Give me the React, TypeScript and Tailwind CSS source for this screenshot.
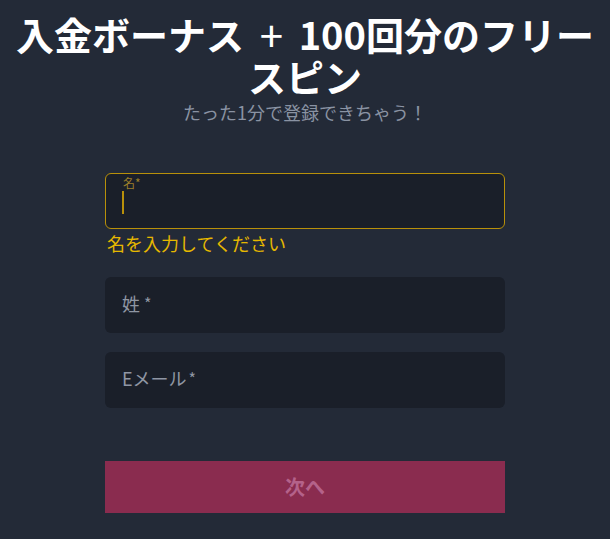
import React from "react";

export default function App() {
  return (
    <div
      className="w-full min-h-[539px] bg-[#232a37] flex flex-col items-center pt-[13px]"
      style={{ fontFamily: '"Noto Sans CJK JP", "Noto Sans", sans-serif' }}
    >
      <h1 className="text-[38px] leading-[42px] font-bold text-white text-center whitespace-nowrap">
        入金ボーナス{" "}
        <span className="inline-block font-normal text-[42px] leading-[42px] align-top mx-[7px]">+</span>{" "}
        100回分のフリー
        <br />
        スピン
      </h1>
      <p className="text-[18px] leading-[24px] text-[#8a93a3] text-center mt-[3px]">
        たった1分で登録できちゃう！
      </p>
      <form className="w-[400px] mt-[49px] flex flex-col">
        <div className="relative h-[56px] rounded-[6px] border border-[#b8900a] bg-[#1a1f29]">
          <span className="absolute left-[17px] top-[1px] text-[12px] leading-[16px] text-[#9c7f2a]">
            名*
          </span>
          <span className="absolute left-[16px] top-[17px] w-[1.5px] h-[23px] bg-[#b8900a]" />
        </div>
        <div className="text-[18px] leading-[24px] text-[#e6b800] mt-[2px] pl-[2px]">
          名を入力してください
        </div>
        <div className="h-[56px] rounded-[6px] bg-[#1a1f29] mt-[22px] flex items-center pl-[17px] pb-[4px] text-[18px] text-[#8f96a3]">
          姓<span className="ml-[4px] text-[16px]">*</span>
        </div>
        <div className="h-[56px] rounded-[6px] bg-[#1a1f29] mt-[19px] flex items-center pl-[17px] pb-[4px] text-[18px] text-[#8f96a3]">
          Eメール<span className="ml-[2px] text-[16px]">*</span>
        </div>
        <button
          type="button"
          className="h-[52px] bg-[#8a2c4f] mt-[53px] text-[20px] font-bold text-[#b4628a]"
        >
          次へ
        </button>
      </form>
    </div>
  );
}
